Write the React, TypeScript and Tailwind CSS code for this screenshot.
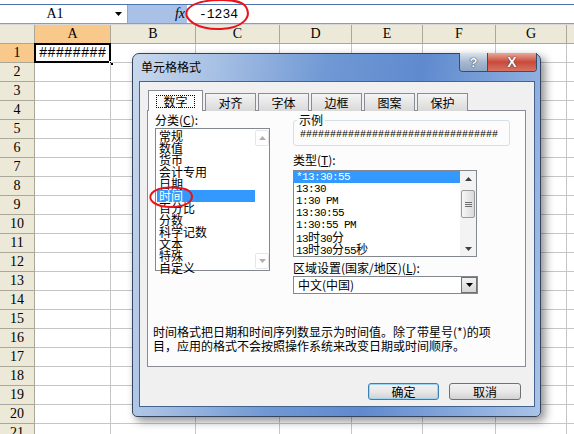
import React from 'react';

const CJK = /([\u3000-\u9fff\uff00-\uffef]+)/;

// Latin in the lists is drawn narrow and fixed-pitch, Chinese at full 12px
function Mixed({ text }: { text: string }) {
  return (
    <>
      {text.split(CJK).map((part, i) =>
        /[\u3000-\u9fff\uff00-\uffef]/.test(part) ? (
          <span key={i} className="font-['Noto_Sans_CJK_SC',sans-serif] text-[12px] tracking-normal">
            {part}
          </span>
        ) : (
          <span key={i}>{part}</span>
        )
      )}
    </>
  );
}

const columns = [
  { letter: 'A', w: 'w-[76px]' },
  { letter: 'B', w: 'w-[85px]' },
  { letter: 'C', w: 'w-[84px]' },
  { letter: 'D', w: 'w-[72px]' },
  { letter: 'E', w: 'w-[71px]' },
  { letter: 'F', w: 'w-[73px]' },
  { letter: 'G', w: 'w-[71px]' },
  { letter: 'H', w: 'w-[72px]' },
];

const rows = Array.from({ length: 21 }, (_, i) => i + 1);

const categories = ['常规', '数值', '货币', '会计专用', '日期', '时间', '百分比', '分数', '科学记数', '文本', '特殊', '自定义'];
const types = ['*13:30:55', '13:30', '1:30 PM', '13:30:55', '1:30:55 PM', '13时30分', '13时30分55秒'];
const tabs = ['对齐', '字体', '边框', '图案', '保护'];

function Arrow({ up, color }: { up?: boolean; color: string }) {
  return (
    <svg width="7" height="4" viewBox="0 0 7 4">
      <path d={up ? 'M0 4 L3.5 0 L7 4 Z' : 'M0 0 L7 0 L3.5 4 Z'} fill={color} />
    </svg>
  );
}

function FormulaBar() {
  return (
    <div className="h-[25px] flex flex-col">
      <div className="h-[4px] bg-white" />
      <div className="h-[1px] bg-[#4d74b0]" />
      <div className="flex h-[18px]">
        <div className="w-[128px] shrink-0 flex items-center bg-white border-r border-[#8aa6d2]">
          <span className="w-[110px] text-center font-['Liberation_Serif',serif] text-[14px] leading-none">A1</span>
          <span className="w-[17px] flex justify-center">
            <Arrow color="#000" />
          </span>
        </div>
        <div className="w-[59px] shrink-0 bg-[#a9c1e6] flex items-center justify-end pr-[2px]">
          <span className="font-['Liberation_Serif',serif] italic text-[14px] leading-none">fx</span>
        </div>
        <div className="flex-1 bg-white flex items-center pl-[12px]">
          <span className="font-['Liberation_Mono',monospace] text-[13px] leading-none">-1234</span>
        </div>
      </div>
      <div className="h-[1px] bg-[#9a9a9a]" />
      <div className="h-[1px] bg-[#d8d8d8]" />
    </div>
  );
}

function Sheet() {
  return (
    <div className="font-['Liberation_Serif',serif] text-[14px]">
      <div className="flex h-[19px]">
        <div className="w-[35px] shrink-0 bg-[#ece9d8] border-r border-b border-[#aca899]" />
        {columns.map((c) => (
          <div
            key={c.letter}
            className={`${c.w} shrink-0 flex items-center justify-center border-r border-b leading-none ${
              c.letter === 'A' ? 'bg-[#f9c98b] border-[#aca899]' : 'bg-[#ece9d8] border-[#aca899]'
            }`}
          >
            {c.letter}
          </div>
        ))}
      </div>
      {rows.map((r) => (
        <div key={r} className="flex h-[19px]">
          <div
            className={`w-[35px] shrink-0 flex items-center justify-center border-r border-b border-[#aca899] leading-none ${
              r === 1 ? 'bg-[#f9c98b]' : 'bg-[#ece9d8]'
            }`}
          >
            {r}
          </div>
          {columns.map((c) => (
            <div key={c.letter} className={`${c.w} shrink-0 relative border-r border-b border-[#c6c6c6]`}>
              {r === 1 && c.letter === 'A' && (
                <>
                  <div className="absolute -left-[1px] -top-[1px] w-[77px] h-[20px] border-2 border-black" />
                  <span className="absolute inset-0 flex items-center justify-center font-['Liberation_Mono',monospace] text-[14px] leading-none">
                    ########
                  </span>
                  <div className="absolute -right-[4px] -bottom-[4px] w-[5px] h-[5px] bg-black border border-white" />
                </>
              )}
            </div>
          ))}
        </div>
      ))}
    </div>
  );
}

function CategoryList() {
  return (
    <div className="w-[115px] h-[143px] border border-[#828790] bg-white flex">
      <div className="flex-1 pt-[1px] pl-[1px]">
        {categories.map((c, i) => (
          <div
            key={c}
            className={`h-[12px] leading-[12px] pl-[2px] whitespace-nowrap ${i === 5 ? 'bg-[#3399ff] text-white' : ''}`}
          >
            {c}
          </div>
        ))}
      </div>
      <div className="w-[14px] flex flex-col justify-between bg-white">
        <div className="h-[16px] mt-[1px] flex items-center justify-center border border-[#e6e6e6] rounded-[2px]">
          <Arrow up color="#b0b0b0" />
        </div>
        <div className="h-[16px] mb-[1px] flex items-center justify-center border border-[#e6e6e6] rounded-[2px]">
          <Arrow color="#b0b0b0" />
        </div>
      </div>
    </div>
  );
}

function TypeList() {
  return (
    <div className="w-[184px] h-[87px] border border-[#828790] bg-white flex">
      <div className="flex-1 font-['Liberation_Mono',monospace] text-[11px] tracking-[-0.6px]">
        {types.map((t, i) => (
          <div
            key={t}
            className={`h-[12px] flex items-baseline pl-[2px] leading-[12px] whitespace-pre ${i === 0 ? 'bg-[#3399ff] text-white' : ''}`}
          >
            <Mixed text={t} />
          </div>
        ))}
      </div>
      <div className="w-[16px] bg-[#f3f3f3] flex flex-col items-center">
        <div className="h-[16px] flex items-center justify-center">
          <Arrow up color="#404040" />
        </div>
        <div className="mt-[3px] w-[14px] h-[28px] rounded-[2px] border border-[#9b9b9b] bg-gradient-to-r from-[#f6f6f6] to-[#dadada] flex flex-col items-center justify-center gap-[1px]">
          <div className="w-[7px] h-[1px] bg-[#6f6f6f]" />
          <div className="w-[7px] h-[1px] bg-[#6f6f6f]" />
          <div className="w-[7px] h-[1px] bg-[#6f6f6f]" />
        </div>
        <div className="flex-1" />
        <div className="h-[14px] flex items-center justify-center">
          <Arrow color="#404040" />
        </div>
      </div>
    </div>
  );
}

function FormatDialog() {
  return (
    <div className="absolute left-[132px] top-[53px] w-[409px] h-[364px] flex flex-col px-[6px] pb-[9px] pr-[5px] rounded-t-[7px] rounded-b-[5px] border border-[#34445e] bg-[linear-gradient(100deg,#c9d8ec_0%,#a7c0e4_18%,#6f98d4_42%,#5f8ace_62%,#85a8dc_82%,#aac3e8_100%)] shadow-[4px_4px_10px_rgba(0,0,0,0.45)]">
      {/* title bar */}
      <div className="h-[27px] shrink-0 flex items-center pl-[2px]">
        <span className="text-[12px] leading-none pb-[1px]">单元格格式</span>
      </div>
      <div className="absolute -top-[1px] right-[3px] flex h-[19px] rounded-b-[4px] border border-t-0 border-[#3b4c68] overflow-hidden">
        <div className="w-[28px] bg-gradient-to-b from-[#dbe4ef] via-[#a7b8cf] to-[#8ea5c2] border-r border-[#3b4c68] flex items-center justify-center">
          <span className="font-['Liberation_Sans',sans-serif] font-bold text-[13px] leading-none text-white [text-shadow:0_0_1px_#1c2b44,0_0_1px_#1c2b44]">?</span>
        </div>
        <div className="w-[48px] bg-gradient-to-b from-[#e8a799] via-[#c7493b] to-[#d77364] flex items-center justify-center">
          <span className="font-['Liberation_Sans',sans-serif] font-bold text-[14px] leading-none text-white [text-shadow:0_0_1px_#4a1010,0_0_1px_#4a1010]">X</span>
        </div>
      </div>

      {/* client area */}
      <div className="flex-1 bg-[#f0f0f0] border border-[#45638f] flex flex-col">
        <div className="h-[21px] mt-[8px] pl-[8px] flex items-end gap-[2px] -mb-[1px] relative">
          <div className="w-[55px] h-[21px] bg-[#fcfcfc] border border-b-0 border-[#898c95] flex items-center justify-center">
            <span className="px-[6px] leading-[12px] h-[13px] border border-dotted border-black">数字</span>
          </div>
          {tabs.map((t) => (
            <div
              key={t}
              className="w-[51px] h-[18px] border border-b-0 border-[#898c95] bg-gradient-to-b from-[#f4f4f4] to-[#d9d9d9] flex items-center justify-center leading-none"
            >
              {t}
            </div>
          ))}
        </div>

        <div className="ml-[7px] w-[379px] h-[257px] border border-[#898c95] bg-[#fcfcfc] flex flex-col">
          <div className="flex items-start">
            <div className="ml-[7px] flex flex-col">
              <div className="h-[14px] mt-[2px] leading-[14px]">
                分类(<span className="underline">C</span>):
              </div>
              <div className="mt-[1px]">
                <CategoryList />
              </div>
            </div>
            <div className="ml-[23px] flex flex-col">
              <div className="relative mt-[9px] w-[217px] h-[26px] border border-[#d5dfe5] rounded-[3px] flex items-center pl-[6px] pt-[3px]">
                <span className="absolute -top-[8px] left-[3px] bg-[#fcfcfc] px-[2px] leading-[14px]">示例</span>
                <span className="font-['Liberation_Mono',monospace] text-[10px] leading-none whitespace-nowrap overflow-hidden">
                  #################################
                </span>
              </div>
              <div className="h-[14px] mt-[7px] leading-[14px]">
                类型(<span className="underline">T</span>):
              </div>
              <div className="mt-[3px]">
                <TypeList />
              </div>
              <div className="h-[14px] mt-[4px] leading-[14px] whitespace-nowrap">
                区域设置(国家/地区)(<span className="underline">L</span>):
              </div>
              <div className="mt-[1px] w-[185px] h-[18px] border border-[#828790] bg-white flex items-center">
                <span className="flex-1 pl-[4px] leading-none">中文(中国)</span>
                <div className="w-[16px] h-[16px] border border-[#707070] bg-gradient-to-b from-[#f2f2f2] to-[#d6d6d6] flex items-center justify-center">
                  <Arrow color="#000" />
                </div>
              </div>
            </div>
          </div>
          <div className="mt-[31px] pl-[5px] leading-[14px] whitespace-nowrap">
            时间格式把日期和时间序列数显示为时间值。除了带星号(*)的项
            <br />
            目，应用的格式不会按照操作系统来改变日期或时间顺序。
          </div>
        </div>

        <div className="mt-[16px] pr-[13px] flex justify-end gap-[10px]">
          <button className="w-[71px] h-[17px] rounded-[3px] border border-[#3c7fb1] bg-gradient-to-b from-[#f2f2f2] via-[#e8e8e8] to-[#d2d2d2] shadow-[inset_0_0_0_1px_#9fd5f2] text-[12px] leading-none">
            确定
          </button>
          <button className="w-[72px] h-[17px] rounded-[3px] border border-[#707070] bg-gradient-to-b from-[#f2f2f2] via-[#e8e8e8] to-[#d2d2d2] text-[12px] leading-none">
            取消
          </button>
        </div>
      </div>
    </div>
  );
}

function Annotations() {
  return (
    <svg className="absolute left-0 top-0 pointer-events-none" width="574" height="434" viewBox="0 0 574 434">
      <path
        d="M241 3 C228 -2 196 -1 188 9 C181 19 198 30 221 29 C243 28 252 17 246 7 C243 2 235 0 224 0"
        fill="none"
        stroke="#e8141c"
        strokeWidth="2"
      />
      <path
        d="M189 191 C181 186 158 186 152 193 C146 200 156 207 171 207 C186 207 195 201 191 193 C189 190 183 188 176 188"
        fill="none"
        stroke="#e8141c"
        strokeWidth="2"
      />
    </svg>
  );
}

export default function App() {
  return (
    <div className="relative w-[574px] h-[434px] overflow-hidden bg-white font-['Noto_Sans_CJK_SC',sans-serif] text-[12px] text-black">
      <FormulaBar />
      <Sheet />
      <FormatDialog />
      <Annotations />
    </div>
  );
}
